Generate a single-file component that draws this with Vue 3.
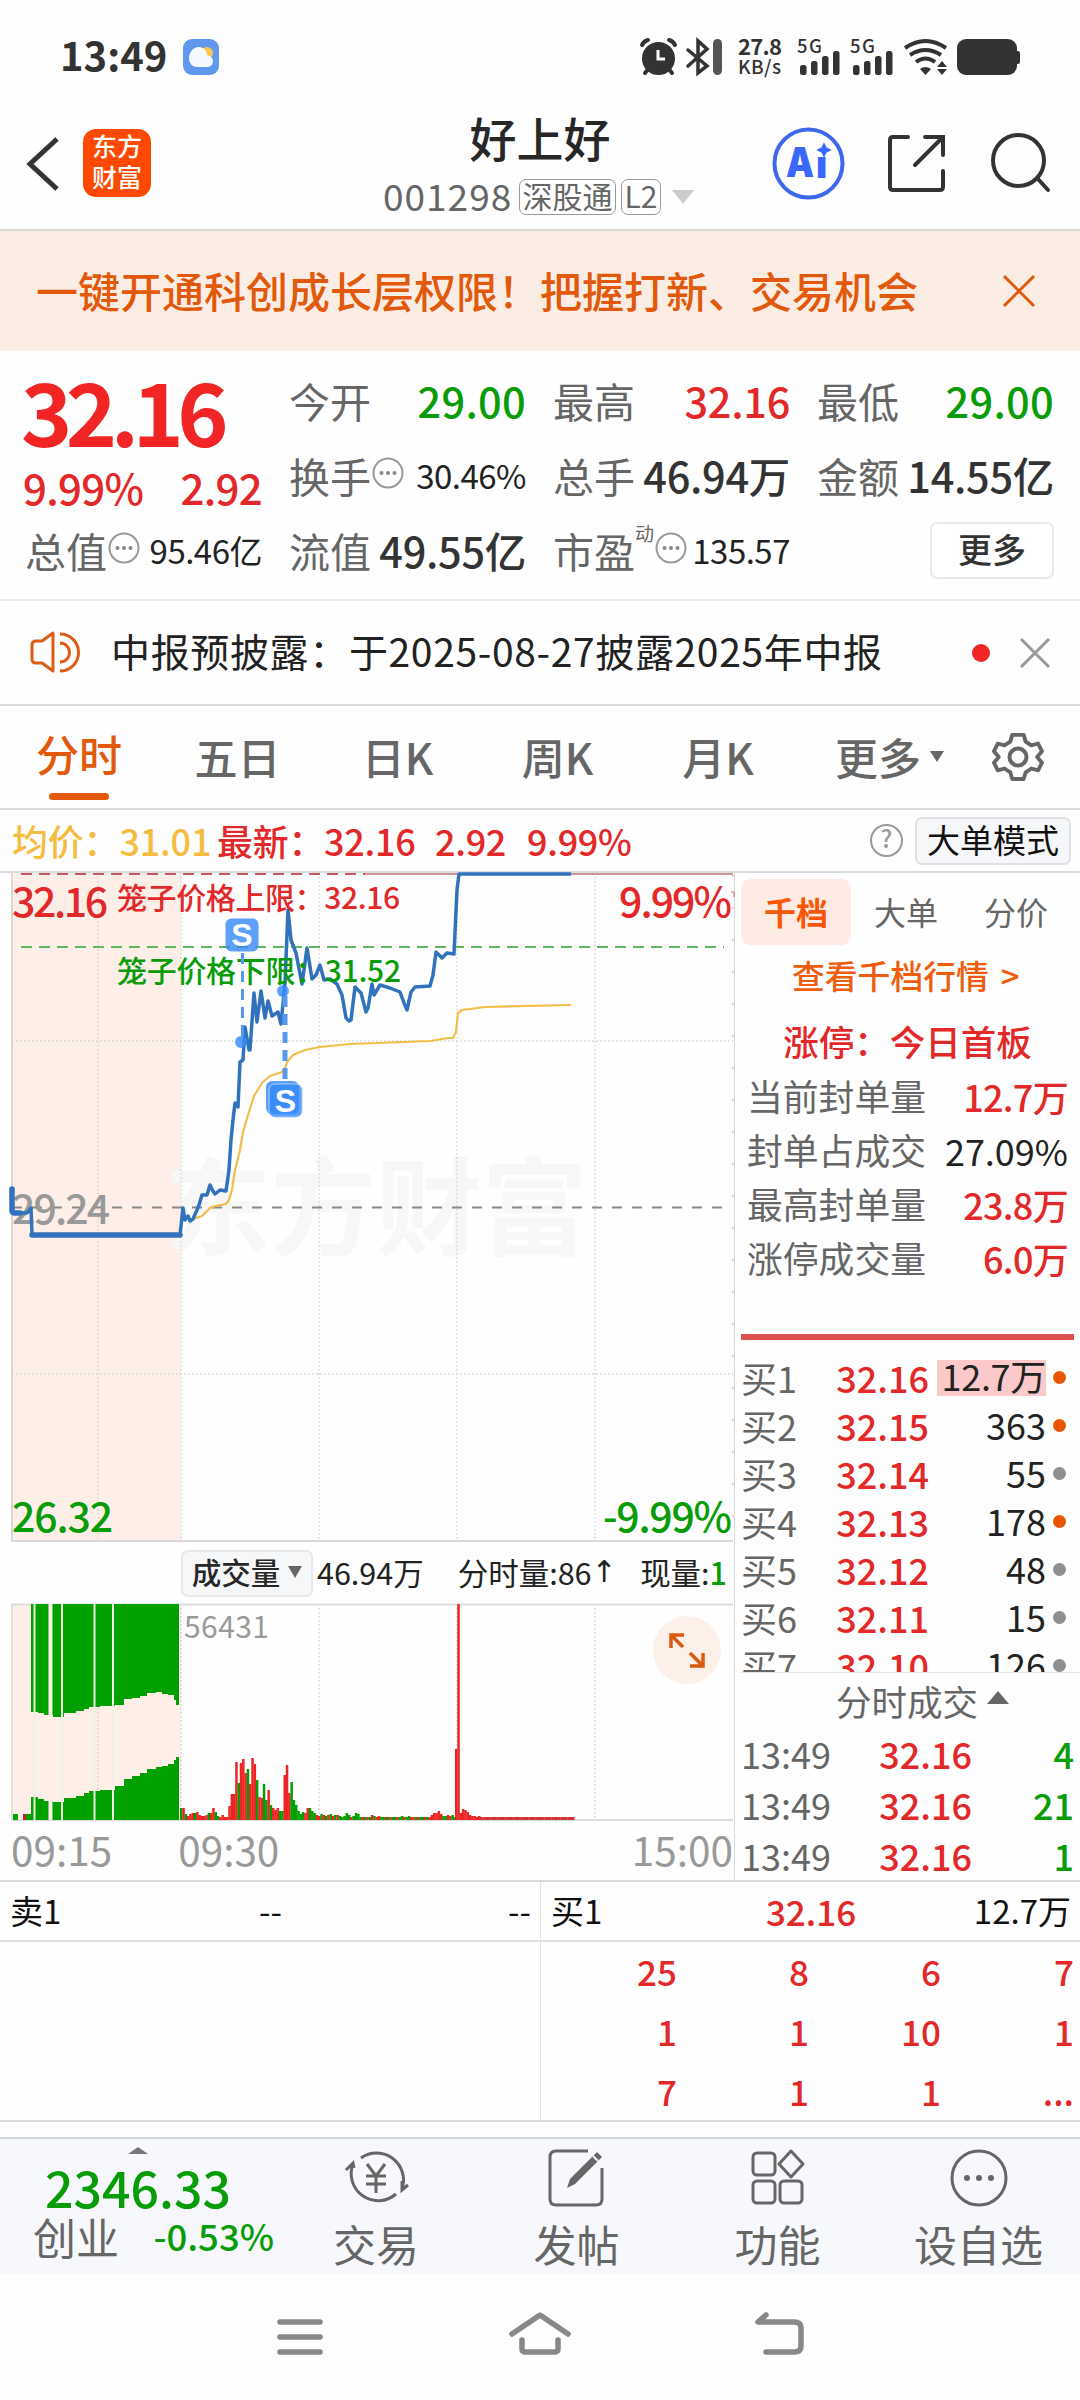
<template>
  <div class="phone">
    <!-- 系统状态栏 -->
    <div class="status">
      <span class="clock">13:49</span>
      <svg class="weather" viewBox="0 0 36 36">
        <rect width="36" height="36" rx="9" fill="#6098ee" />
        <circle cx="24" cy="14" r="6" fill="#f9c74f" />
        <path d="M14 28a8 8 0 0 1-8-8c0-7 4-12 10-12 5 0 8 4 8 8 4 1 6 3 6 6 0 4-3 6-6 6z" fill="#f4f9ff" />
      </svg>
      <svg class="sys" viewBox="640 36 384 42">
        <g stroke="#333" stroke-width="4" fill="none" stroke-linecap="round">
          <circle cx="658.500" cy="58.500" r="14.500" fill="#333" />
          <path d="M642 45q2-4 6-5M669 40q4 1 6 5M649 68l-4 5M668 68l4 5" />
          <path d="M658 50v9h7" stroke="#fff" stroke-width="3" stroke-linecap="butt" />
          <path d="M688 50l19 16-9 7V41l9 8-19 17" stroke-width="3.500" />
        </g>
        <rect x="713" y="39" width="9" height="36" rx="4.500" fill="#555" />
        <g fill="#333">
          <text x="738" y="55" font-size="22" font-weight="700" textLength="44">27.8</text>
          <text x="738" y="74" font-size="19" font-weight="500" textLength="43">KB/s</text>
          <g v-for="x in [0, 53]" :key="x">
            <text :x="797 + x" y="53" font-size="18.500" font-weight="500" textLength="25">5G</text>
            <rect :x="800 + x" y="65" width="6.500" height="10" rx="2.500" />
            <rect :x="811 + x" y="61" width="6.500" height="14" rx="2.500" />
            <rect :x="822 + x" y="56" width="6.500" height="19" rx="2.500" />
            <rect :x="833 + x" y="51" width="6.500" height="24" rx="2.500" />
          </g>
          <path d="M920 69q5-4 11 0l-5.500 6zM937 67l5-6 5 6zM937 69l5 6 5-6z" />
          <rect x="957" y="39" width="60" height="36" rx="9" />
          <rect x="1014" y="51" width="6" height="13" rx="2" />
        </g>
        <g stroke="#333" stroke-width="4" fill="none">
          <path d="M905 48q20.500-14 41 0M910 55q15.500-10 31 0M916 62q9.500-7 19 0" />
        </g>
      </svg>
    </div>

    <!-- 标题栏 -->
    <header class="header">
      <svg class="back" viewBox="0 0 34 56"><path d="M31 3L4 28l27 25" fill="none" stroke="#333" stroke-width="5" /></svg>
      <div class="logo"><span>东方</span><span>财富</span></div>
      <div class="title">
        <h1>好上好</h1>
        <div class="code">
          <span class="num">001298</span>
          <span class="tag wide">深股通</span>
          <span class="tag">L2</span>
          <i class="caret"></i>
        </div>
      </div>
      <svg class="actions" viewBox="772 126 282 74">
        <circle cx="808.500" cy="163.500" r="34" fill="none" stroke="#3d67ec" stroke-width="4" />
        <g class="ai" fill="#3a68ff">
          <text x="786" y="177" font-size="41" textLength="28" lengthAdjust="spacingAndGlyphs">A</text>
          <text x="816" y="178" font-size="38">ı</text>
        </g>
        <path d="M824 144l2 4 4 2-4 2-2 4-2-4-4-2 4-2z" fill="#3a68ff" stroke="#3a68ff" stroke-width="1.500" />
        <g fill="none" stroke="#333" stroke-width="4" stroke-linecap="round">
          <path d="M908 137h-15q-3 0-3 3v47q0 3 3 3h47q3 0 3-3v-16M925 137h18v18M943 137l-28 28" />
          <circle cx="1018.500" cy="160.500" r="25.500" />
          <path d="M1038 179l10 11" />
        </g>
      </svg>
    </header>

    <div class="banner">
      <span>一键开通科创成长层权限！把握打新、交易机会</span>
      <svg viewBox="0 0 32 32"><path d="M1 1l30 30M31 1L1 31" stroke="#e2590b" stroke-width="3" /></svg>
    </div>

    <!-- 行情报价 -->
    <section class="quote">
      <div class="price">
        <div class="big">32.16</div>
        <div class="chg"><span>9.99%</span><span>2.92</span></div>
      </div>
      <div v-for="q in quotes" :key="q.label" class="cell">
        <span class="label">{{ q.label }}<sup v-if="q.sup">{{ q.sup }}</sup></span>
        <svg v-if="q.tip" class="tip" viewBox="0 0 32 32">
          <circle cx="16" cy="16" r="14.500" fill="none" stroke="#999" stroke-width="2" />
          <g fill="#888"><circle cx="9.500" cy="16" r="2" /><circle cx="16" cy="16" r="2" /><circle cx="22.500" cy="16" r="2" /></g>
        </svg>
        <span class="value" :class="[q.color, { small: q.tip }]">{{ q.value }}</span>
      </div>
      <div class="cell"><button class="more">更多</button></div>
    </section>

    <div class="news">
      <svg class="horn" viewBox="0 0 50 44" fill="none" stroke="#de5c14" stroke-width="3" stroke-linejoin="round">
        <path d="M23 2L12 10H6q-4 0-4 4v14q0 4 4 4h6l11 8z" />
        <path d="M30 12a9.500 9.500 0 0 1 0 19M30 3a18.500 18.500 0 0 1 0 37" />
      </svg>
      <span class="text">中报预披露：于2025-08-27披露2025年中报</span>
      <i class="dot"></i>
      <svg class="close" viewBox="0 0 30 30"><path d="M1 1l28 28M29 1L1 29" stroke="#999" stroke-width="3" /></svg>
    </div>

    <nav class="tabs">
      <span class="active">分时</span>
      <span>五日</span>
      <span>日K</span>
      <span>周K</span>
      <span>月K</span>
      <span class="last">更多<i></i></span>
      <svg viewBox="0 0 52 52" fill="none" stroke="#666" stroke-width="4" stroke-linejoin="round">
        <path d="M20 3h12l2 7 6 4 7-2 4 8-5 6 5 6-4 8-7-2-6 4-2 7H20l-2-7-6-4-7 2-4-8 5-6-5-6 4-8 7 2 6-4z" transform="translate(1 1) scale(.96)" />
        <circle cx="26" cy="26" r="8.500" />
      </svg>
    </nav>

    <div class="info">
      <span class="avg">均价：31.01</span>
      <span class="last">最新：32.16</span>
      <span class="last d">2.92</span>
      <span class="last p">9.99%</span>
      <span class="help">?</span>
      <button>大单模式</button>
    </div>

    <div class="body">
      <div class="charts">
        <!-- 分时走势 -->
        <svg class="trend" viewBox="0 873 735 669">
          <rect x="12" y="873" width="169" height="668" fill="#fdeee7" />
          <text class="mark" x="165" y="1247" textLength="422" lengthAdjust="spacingAndGlyphs">东方财富</text>
          <g stroke="#d4d4d4" stroke-width="1.500" stroke-dasharray="1.500 2.500">
            <path v-for="x in [98, 181, 319, 457, 595]" :key="x" :d="`M${x} 873V1541`" />
            <path d="M12 1041H733M12 1374H733" />
          </g>
          <path d="M12 873V1541H733" fill="none" stroke="#d8d8d8" stroke-width="2" />
          <path d="M733 875V1541" stroke="#dc9a9a" stroke-width="1" stroke-dasharray="2 30" />
          <path d="M731 892h3v5" fill="none" stroke="#dc6a6a" />
          <path d="M21 874H733" stroke="#c6595c" stroke-width="2" stroke-dasharray="11 7" />
          <path d="M365 874H733" stroke="#cf9599" stroke-width="2" />
          <path d="M21 947H724" stroke="#5fb75f" stroke-width="2" stroke-dasharray="11 7" />
          <path d="M12 1207.500H730" stroke="#888" stroke-width="2" stroke-dasharray="10 10" />
          <g class="axis">
            <text x="12" y="917" fill="#e22828" textLength="96">32.16</text>
            <text x="12" y="1224" fill="#999" textLength="98">29.24</text>
            <text x="12" y="1532" fill="#089c08" textLength="101">26.32</text>
            <text x="619" y="917" fill="#e22828" textLength="113">9.99%</text>
            <text x="603" y="1532" fill="#089c08" textLength="129">-9.99%</text>
          </g>
          <polyline :points="avgLine" fill="none" stroke="#f2bd49" stroke-width="2.200" stroke-linejoin="round" />
          <polyline :points="priceLine" fill="none" stroke="#3073bc" stroke-width="3.500" stroke-linejoin="round" />
          <path d="M12 1189V1211M14 1213H20M32 1235H180" stroke="#3073bc" stroke-width="5.500" stroke-linecap="round" />
          <g class="cage">
            <text x="117" y="909" fill="#e22828" textLength="283">笼子价格上限：32.16</text>
            <text x="117" y="982" fill="#089c08" textLength="284">笼子价格下限：31.52</text>
          </g>
          <!-- 卖出标记 -->
          <g stroke="#5798ef" stroke-dasharray="11 7">
            <path d="M242.500 953V1040" stroke-width="3" />
            <path d="M285 996V1082" stroke-width="5" />
          </g>
          <g fill="#3388fb" fill-opacity=".8">
            <circle cx="241" cy="1042" r="6" /><circle cx="283" cy="991" r="6" />
            <rect x="225.500" y="918.500" width="33" height="33" rx="6" />
            <rect x="266" y="1081" width="33" height="33" rx="6" />
            <rect x="269" y="1084" width="33" height="33" rx="6" stroke="#a9cffc" />
          </g>
          <g class="sell"><text x="242" y="946">S</text><text x="285.500" y="1112">S</text></g>
        </svg>

        <div class="volbar">
          <button>成交量<i></i></button>
          <span class="total">46.94万</span>
          <span class="min">分时量:86<small>↑</small></span>
          <span class="now">现量:<b>1</b></span>
        </div>

        <svg class="volume" viewBox="0 1604 735 218">
          <rect x="12" y="1604" width="169" height="216" fill="#fdeee7" />
          <path v-for="x in [98, 181, 319, 457, 595]" :key="x" :d="`M${x} 1604V1820`" stroke="#d4d4d4" stroke-width="1.500" stroke-dasharray="1.500 2.500" />
          <path d="M12 1604.500H733M12 1604V1820H733" fill="none" stroke="#ddd" stroke-width="2" />
          <path :d="auctionPath" fill="#00a000" />
          <path d="M34.500 1604V1820M62 1604V1820M94.500 1604V1820M113 1604V1820" stroke="#eef0e2" stroke-width="2" />
          <path d="M50.500 1604V1820" stroke="#fdeee7" stroke-width="4" />
          <path d="M13 1814h5v6h-5zM26 1814h5v6h-5z" fill="#00a000" />
          <path d="M23 1814h3v6h-3z" fill="#c02828" />
          <rect v-for="(b, i) in bars" :key="i" :x="b.x" :y="1820 - b.h" width="2.500" :height="b.h" :fill="b.c" />
          <text x="184" y="1638" font-size="30" fill="#999" textLength="85">56431</text>
          <circle cx="687" cy="1650" r="34" fill="#fdf0e8" />
          <path d="M671 1648v-13h13M672 1636l11 11M703 1653v13h-13M702 1665l-12-12" fill="none" stroke="#dc5a10" stroke-width="3.500" />
        </svg>
        <div class="times"><span>09:15</span><span class="t2">09:30</span><span class="t3">15:00</span></div>
      </div>

      <!-- 右侧盘口 -->
      <aside class="side">
        <div class="side-tabs"><span class="on">千档</span><span>大单</span><span>分价</span></div>
        <div class="link">查看千档行情<span>&gt;</span></div>
        <div class="limit">涨停：今日首板</div>
        <div v-for="s in stats" :key="s.k" class="stat"><span>{{ s.k }}</span><b :class="s.c">{{ s.v }}</b></div>
        <div class="bar"></div>
        <div class="orders">
          <div v-for="(o, i) in orders" :key="i" class="order">
            <span class="lv">买{{ i + 1 }}</span>
            <span class="pr">{{ o[0] }}</span>
            <span class="qty"><em :class="{ hl: i === 0 }">{{ o[1] }}</em></span>
            <i :class="{ hot: o[2] }"></i>
          </div>
        </div>
        <div class="deal-title">分时成交<i></i></div>
        <div v-for="n in [4, 21, 1]" :key="n" class="deal"><span>13:49</span><span class="pr">32.16</span><span class="n">{{ n }}</span></div>
      </aside>
    </div>

    <!-- 买一卖一队列 -->
    <div class="queue">
      <div class="half">
        <div class="qhead"><span>卖1</span><span class="mid">--</span><span class="end">--</span></div>
      </div>
      <div class="half buy">
        <div class="qhead"><span>买1</span><span class="mid red">32.16</span><span class="end">12.7万</span></div>
        <div class="qgrid"><span v-for="(n, i) in queue" :key="i">{{ n }}</span></div>
      </div>
    </div>

    <footer class="toolbar">
      <div class="index">
        <i></i>
        <div class="point">2346.33</div>
        <div class="line"><span>创业</span><b>-0.53%</b></div>
      </div>
      <div class="tool">
        <svg viewBox="0 0 66 60">
          <path d="M18 10a27 27 0 0 1 41 31M53 46A27 27 0 0 1 10 16M3 22l7-7 1 5M59 33v9l6-5" />
          <path d="M24 16l9 12 9-12M23 28h20M23 36h20M33 28v17" />
        </svg>
        <span>交易</span>
      </div>
      <div class="tool">
        <svg viewBox="0 0 66 60">
          <path d="M44 3H12q-6 0-6 6v42q0 6 6 6h40q6 0 6-6V20" />
          <path d="M23 40l3-9L53 4l5 5-27 27z" fill="#666" stroke="none" />
          <path d="M49 8l5 5" stroke="#f7f8fa" stroke-width="2" />
        </svg>
        <span>发帖</span>
      </div>
      <div class="tool">
        <svg viewBox="0 0 66 60">
          <rect x="8" y="5" width="22" height="22" rx="4" />
          <path d="M46 3l12 13-12 13-12-13z" stroke-linejoin="round" />
          <rect x="8" y="33" width="22" height="22" rx="4" />
          <rect x="35" y="33" width="22" height="22" rx="4" />
        </svg>
        <span>功能</span>
      </div>
      <div class="tool">
        <svg viewBox="0 0 66 60">
          <circle cx="33" cy="30" r="27" />
          <g fill="#666" stroke="none"><circle cx="21" cy="30" r="3" /><circle cx="33" cy="30" r="3" /><circle cx="45" cy="30" r="3" /></g>
        </svg>
        <span>设自选</span>
      </div>
    </footer>

    <div class="sysnav">
      <svg viewBox="0 0 540 60" fill="none" stroke="#888" stroke-width="5.500" stroke-linecap="round" stroke-linejoin="round">
        <path d="M13 22h40M13 37h40M13 52h40" />
        <path d="M245 34l28-19 28 19M255 40v9q0 3 4 3h28q4 0 4-3v-9" />
        <path d="M499 15l-8 7h36q7 0 7 6v18q0 6-7 6h-28" />
      </svg>
    </div>
  </div>
</template>

<script setup>
const quotes = [
  { label: '今开', value: '29.00', color: 'green' },
  { label: '最高', value: '32.16', color: 'red' },
  { label: '最低', value: '29.00', color: 'green' },
  { label: '换手', value: '30.46%', tip: true },
  { label: '总手', value: '46.94万' },
  { label: '金额', value: '14.55亿' },
  { label: '总值', value: '95.46亿', tip: true },
  { label: '流值', value: '49.55亿' },
  { label: '市盈', value: '135.57', tip: true, sup: '动' },
]

const stats = [
  { k: '当前封单量', v: '12.7万', c: 'red' },
  { k: '封单占成交', v: '27.09%', c: '' },
  { k: '最高封单量', v: '23.8万', c: 'red' },
  { k: '涨停成交量', v: '6.0万', c: 'red' },
]

// 价格, 数量, 是否橙点
const orders = [
  ['32.16', '12.7万', true],
  ['32.15', '363', true],
  ['32.14', '55', false],
  ['32.13', '178', true],
  ['32.12', '48', false],
  ['32.11', '15', false],
  ['32.10', '126', false],
]

const queue = ['25', '8', '6', '7', '1', '1', '10', '1', '7', '1', '1', '...']

const priceLine = '12,1188 12,1213 20,1213 27,1213 31,1208 32,1235 180,1235 183,1208 185,1220 188,1216 190,1221 193,1219 197,1210 199,1205 202,1195 207,1195 210,1185 213,1191 215,1194 220,1190 226,1191 229,1170 231,1140 233,1120 235,1103 238,1107 240,1062 243,1060 245,1027 249,1050 250,1050 254,993 257,1022 261,991 265,1018 268,1001 272,1016 278,1012 281,1024 285,983 288,910 291,940 296,953 302,984 307,948 312,979 316,975 320,965 324,980 330,979 337,984 342,995 346,1018 349,1021 351,1020 355,987 361,993 366,1012 368,1008 372,984 374,995 380,985 390,988 400,992 404,1003 407,1010 411,992 415,987 430,986 433,975 436,952 442,958 447,953 454,954 457,890 459,874 571,874'

const avgLine = '193,1219 202,1216 210,1208 215,1206 226,1204 229,1200 232,1190 235,1170 240,1150 243,1132 248,1115 254,1096 262,1083 270,1076 282,1072 285,1068 287,1062 293,1055 305,1050 320,1047 350,1044 430,1041 448,1038 453,1038 456,1032 458,1013 462,1010 470,1009 485,1007 571,1005'

// 集合竞价: x, 上沿, 下沿
const auction = [
  [31, 1712, 1797], [38, 1713, 1799], [44, 1715, 1801], [53, 1717, 1802], [64, 1713, 1798],
  [76, 1711, 1796], [84, 1709, 1793], [89, 1707, 1791], [100, 1706, 1790], [115, 1705, 1786],
  [124, 1699, 1779], [132, 1698, 1776], [140, 1696, 1773], [147, 1693, 1769], [156, 1692, 1767],
  [162, 1694, 1766], [168, 1695, 1764], [174, 1700, 1760], [176, 1705, 1757],
]
const auctionPath = auction
  .map(([x, top, bottom], i) => {
    const end = i + 1 < auction.length ? auction[i + 1][0] : 179
    return `M${x} 1604H${end}V${top}H${x}zM${x} ${bottom}H${end}V1820H${x}z`
  })
  .join('')

// 每分钟成交量, g 绿 r 红
const volumes = (
  'g12 r12 g6 r4 r6 r7 g7 r8 r5 r4 r4 r5 g7 r7 r12 g8 g4 r3 r5 r3 r3 r14 r26 r26 r58 g37 r57 r61 r47 g51 r36 r62 r56 g40 r23 r22 g36 g20 r30 g15 r12 r10 r12 g9 g9 r45 r55 r27 g38 g20 g15 ' +
  'g9 g6 g8 r7 r12 g12 g9 g7 r5 r4 g6 r5 g4 r5 g6 r4 g5 r5 g4 g3 g4 g7 g5 r3 g4 g7 g6 g3 r3 g3 r3 g3 r5 g4 r3 r4 g3 g3 r3 g3 r3 g3 g3 r3 g3 g4 r3 g3 g4 r3 r3 g3 r3 g3 g3 r3 g3 r3 r5 r7 r7 r9 r6 g4 g4 r5 r4 g5 g3'
).split(' ')
const bars = volumes.map((s, i) => ({ x: 180 + i * 2.3, h: Number(s.slice(1)), c: s[0] === 'g' ? '#00a000' : '#ee2424' }))
const limitBars = [71, 216, 7, 11, 10, 8, 5, 4, 4, 3, 4]
limitBars.forEach((h, i) => bars.push({ x: 455 + i * 2.3, h, c: '#ee2424' }))
for (let x = 480; x < 572; x += 2.3) bars.push({ x, h: 3, c: '#cf3030' })
</script>

<style>
body {
  background: #fff;
}
</style>

<style scoped>
.phone {
  width: 1080px;
  height: 2400px;
  overflow: hidden;
  display: flex;
  flex-direction: column;
  background: #fefefe;
  color: #333;
  font-family: 'Noto Sans CJK SC', sans-serif;
  font-weight: 400;
  line-height: 1;
  white-space: nowrap;
}
.phone > * {
  flex: none;
  box-sizing: border-box;
}
button {
  font-family: inherit;
  line-height: 1;
  padding: 0 0 4px;
  box-sizing: border-box;
}
h1 {
  margin: 0;
}
svg {
  overflow: visible;
}
.red {
  color: #e22828;
}
.green {
  color: #089c08;
}

.status {
  height: 100px;
  display: flex;
  align-items: center;
  padding: 13px 56px 0 60px;
}
.clock {
  font-size: 40px;
  font-weight: 700;
  width: 108px;
  padding-bottom: 5px;
}
.weather {
  width: 36px;
  height: 36px;
  margin-left: 15px;
}
.sys {
  width: 384px;
  height: 42px;
  margin-left: auto;
}

.header {
  height: 131px;
  display: flex;
  align-items: flex-start;
  border-bottom: 2px solid #d8d8d6;
}
.back {
  width: 34px;
  height: 56px;
  margin: 36px 0 0 26px;
}
.logo {
  width: 68px;
  height: 68px;
  margin: 29px 0 0 23px;
  padding: 4px 0 8px;
  box-sizing: border-box;
  border-radius: 13px;
  background: #ff4800;
  color: #fff;
  font-size: 25px;
  font-weight: 500;
  display: flex;
  flex-direction: column;
  align-items: center;
  justify-content: space-between;
}
.title {
  width: 460px;
  margin-left: 159px;
  display: flex;
  flex-direction: column;
  align-items: center;
}
.title h1 {
  font-size: 47px;
  font-weight: 500;
  color: #272727;
  margin-top: 13px;
}
.code {
  display: flex;
  align-items: center;
  align-self: flex-start;
  margin: 17px 0 0 73px;
  color: #666;
  height: 40px;
}
.code .num {
  font-size: 37px;
  width: 136px;
  letter-spacing: 1px;
  padding-bottom: 3px;
}
.tag {
  width: 40px;
  height: 36px;
  box-sizing: border-box;
  border: 1.5px solid #999;
  border-radius: 7px;
  font-size: 30px;
  line-height: 30px;
  text-align: center;
  margin-right: 11px;
}
.tag.wide {
  width: 97px;
  margin-right: 5px;
}
.caret {
  border: 11px solid transparent;
  border-top: 14px solid #ccc;
  border-bottom: 0;
}
.actions {
  width: 282px;
  height: 74px;
  margin: 26px 26px 0 auto;
}
.ai {
  font-family: Inter, sans-serif;
  font-weight: 900;
}

.banner {
  height: 120px;
  background: #fcede4;
  color: #e2590b;
  font-size: 42px;
  font-weight: 500;
  display: flex;
  align-items: center;
  justify-content: space-between;
  padding: 0 45px 0 36px;
}
.banner span {
  padding-bottom: 2px;
}
.banner svg {
  width: 32px;
  height: 32px;
}

.quote {
  height: 250px;
  border-bottom: 2px solid #eaeaea;
  display: grid;
  grid-template-columns: repeat(4, 237px);
  grid-template-rows: repeat(3, 75px);
  column-gap: 27px;
  padding: 14px 0 0 25px;
}
.price {
  grid-row: span 2;
  color: #f22525;
}
.big {
  font-size: 87px;
  font-weight: 700;
  letter-spacing: -6.5px;
  margin: 1px 0 0 -4px;
}
.chg {
  display: flex;
  justify-content: space-between;
  font-size: 42px;
  letter-spacing: -0.7px;
  color: #e22828;
  margin: 13px 0 0 -2px;
  font-weight: 500;
}
.cell {
  display: flex;
  align-items: center;
  padding-bottom: 4px;
}
.label {
  font-size: 41px;
  color: #666;
  display: flex;
}
.label sup {
  font-size: 19px;
  margin-top: -7px;
}
.tip {
  width: 32px;
  height: 32px;
  margin: 0 0 6px 1px;
}
.value {
  font-size: 41.5px;
  letter-spacing: -0.3px;
  margin-left: auto;
  font-weight: 500;
}
.value.green {
  letter-spacing: 0.3px;
}
.value.small {
  font-size: 33px;
  font-weight: 400;
  letter-spacing: -0.5px;
  color: #222;
}
.more {
  width: 124px;
  height: 57px;
  margin-left: auto;
  border: 2px solid #e6e8ea;
  border-radius: 7px;
  background: #fff;
  color: #333;
  font-size: 34px;
  font-weight: 500;
}

.news {
  height: 105px;
  border-bottom: 2px solid #d8d9db;
  display: flex;
  align-items: center;
  padding: 0 30px 0 30px;
}
.horn {
  width: 50px;
  height: 44px;
}
.news .text {
  font-size: 39px;
  letter-spacing: 0.65px;
  margin-left: 31px;
  padding-bottom: 4px;
  color: #222;
}
.dot {
  width: 18px;
  height: 18px;
  border-radius: 50%;
  background: #f22525;
  margin-left: auto;
}
.close {
  width: 30px;
  height: 30px;
  margin-left: 30px;
}

.tabs {
  height: 104px;
  border-bottom: 2px solid #d8d9db;
  display: grid;
  grid-template-columns: 158px 159px 161px 159px 162px 191px 52px;
  align-items: center;
  font-size: 43px;
  font-weight: 500;
  color: #666;
}
.tabs span {
  justify-self: center;
  padding-bottom: 1px;
}
.tabs .active {
  color: #e2590b;
  height: 76px;
  align-self: end;
  display: flex;
  flex-direction: column;
  align-items: center;
  padding: 0;
}
.tabs .active::after {
  content: '';
  width: 60px;
  height: 7px;
  border-radius: 4px;
  background: #e2590b;
  margin-top: 18px;
}
.tabs .last {
  justify-self: end;
  margin-right: 46px;
  display: flex;
  align-items: center;
}
.tabs .last i {
  border: 7px solid transparent;
  border-top: 11px solid #666;
  border-bottom: 0;
  margin-left: 9px;
}
.tabs svg {
  width: 52px;
  height: 52px;
  margin-left: 2px;
}

.info {
  height: 63px;
  border-bottom: 2px solid #d8d9db;
  display: flex;
  align-items: center;
  font-size: 36px;
  font-weight: 500;
  padding: 0 9px 0 12px;
}
.info span {
  padding-bottom: 2px;
}
.info .avg {
  color: #f5bc41;
  width: 205px;
  letter-spacing: -0.2px;
}
.info .last {
  color: #e22828;
  width: 218px;
  letter-spacing: -0.3px;
}
.info .last.d {
  width: 92px;
}
.info .last.p {
  width: 110px;
}
.info .help {
  box-sizing: border-box;
  width: 33px;
  height: 33px;
  border: 2.5px solid #999;
  border-radius: 50%;
  font-size: 24px;
  text-align: center;
  color: #999;
  margin-left: auto;
  padding: 0;
}
.info button {
  width: 156px;
  height: 48px;
  margin-left: 12px;
  padding: 0 0 3px;
  border: 2px solid #dfe1e5;
  border-radius: 7px;
  background: #f6f7f9;
  font-size: 33px;
  font-weight: 400;
  color: #111;
}

.body {
  height: 1009px;
  display: flex;
  border-bottom: 2px solid #d8d9db;
}
.charts {
  width: 735px;
  box-sizing: border-box;
  border-right: 1px solid #d8d9db;
}
.trend {
  display: block;
  width: 735px;
  height: 669px;
}
.axis {
  font-size: 41px;
  font-weight: 500;
}
.cage {
  font-size: 30px;
  font-weight: 500;
}
.mark {
  font-size: 106px;
  font-weight: 700;
  fill: #f7f7f7;
}
.sell {
  font: 700 32px 'Liberation Sans', sans-serif;
  fill: #fff;
  text-anchor: middle;
}
.volbar {
  height: 62px;
  display: flex;
  align-items: center;
  padding-left: 181px;
  font-size: 30.5px;
  color: #222;
}
.volbar > span {
  padding-bottom: 2px;
}
.volbar button {
  width: 132px;
  height: 47px;
  display: flex;
  align-items: center;
  justify-content: center;
  padding: 0 0 3px;
  border: 2px solid #e6e8eb;
  border-radius: 7px;
  background: #f6f7f9;
  font-size: 29.5px;
  font-weight: 500;
  color: #272727;
}
.volbar button i {
  border: 7px solid transparent;
  border-top: 12px solid #666;
  border-bottom: 0;
  margin-left: 8px;
}
.total {
  margin-left: 4px;
}
.min {
  margin-left: 34px;
  display: flex;
}
.min small {
  font-family: 'DejaVu Sans', sans-serif;
  font-size: 30px;
  width: 20px;
}
.now {
  margin-left: auto;
  padding-right: 7px;
}
.now b {
  color: #089c08;
  font-weight: 500;
}
.volume {
  display: block;
  width: 735px;
  height: 218px;
}
.times {
  display: flex;
  padding: 7px 1px 0 11px;
  font-size: 40.5px;
  color: #999;
}
.times .t2 {
  margin-left: 66px;
}
.times .t3 {
  margin-left: auto;
}

.side {
  width: 345px;
  box-sizing: border-box;
  padding: 6px 6px 0 6px;
}
.side-tabs {
  display: flex;
  height: 66px;
  font-size: 32px;
  color: #666;
}
.side-tabs span {
  width: 110px;
  line-height: 64px;
  text-align: center;
}
.side-tabs .on {
  background: #feece4;
  border-radius: 9px;
  color: #fb5607;
  font-weight: 700;
}
.link {
  margin-top: 14px;
  padding-left: 51px;
  font-size: 32.8px;
  color: #ee5c0c;
  font-weight: 500;
}
.link span {
  margin-left: 12px;
}
.limit {
  margin: 31px 0 11px;
  text-align: center;
  font-size: 35.5px;
  font-weight: 500;
  color: #e22828;
}
.stat {
  height: 54px;
  padding: 0 6px;
  display: flex;
  justify-content: space-between;
  align-items: center;
  font-size: 35.8px;
  color: #666;
}
.stat b {
  font-weight: 400;
  font-size: 36px;
  color: #222;
}
.stat b.red {
  color: #e22828;
  font-weight: 500;
  letter-spacing: -0.7px;
}
.bar {
  height: 6px;
  margin-top: 49px;
  background: #de5050;
}
.orders {
  height: 333px;
  overflow: hidden;
  padding-top: 13px;
  box-sizing: border-box;
  border-bottom: 1px solid #e4e4e4;
  margin-right: -6px;
}
.order {
  height: 48px;
  display: flex;
  align-items: center;
  font-size: 36px;
}
.lv {
  width: 66px;
  color: #666;
}
.order .pr {
  width: 122px;
  text-align: right;
  color: #e22828;
  font-weight: 500;
}
.qty {
  width: 117px;
  text-align: right;
  color: #222;
}
.qty em {
  font-style: normal;
  display: inline-block;
  height: 36px;
  line-height: 31px;
}
.qty .hl {
  background: #fbc9c9;
  padding-left: 5px;
  margin-bottom: 2px;
  letter-spacing: -0.3px;
}
.order i {
  width: 13px;
  height: 13px;
  border-radius: 50%;
  background: #8e8e93;
  margin-left: 7px;
}
.order i.hot {
  background: #e85500;
}
.deal-title {
  height: 54px;
  display: flex;
  align-items: center;
  padding-left: 95px;
  font-size: 35.5px;
  color: #666;
}
.deal-title i {
  border: 11px solid transparent;
  border-bottom: 13px solid #666;
  border-top: 0;
  margin: 0 0 5px 9px;
}
.deal {
  height: 51px;
  display: flex;
  align-items: center;
  font-size: 36px;
  color: #666;
}
.deal .pr {
  width: 141px;
  text-align: right;
  color: #e22828;
  font-weight: 500;
}
.deal .n {
  margin-left: auto;
  color: #089c08;
  font-weight: 500;
}

.queue {
  height: 240px;
  display: flex;
  border-bottom: 2px solid #d8d9db;
  font-size: 33px;
}
.half {
  width: 540px;
  box-sizing: border-box;
}
.buy {
  border-left: 1px solid #e2e4e6;
}
.qhead {
  height: 60px;
  box-sizing: border-box;
  display: grid;
  grid-template-columns: 1fr 1fr 1fr;
  align-items: center;
  padding: 0 9px 2px 10px;
  border-bottom: 2px solid #dfe1e2;
  color: #111;
}
.qhead .mid {
  text-align: center;
}
.qhead .mid.red {
  color: #e22828;
  font-size: 35px;
  font-weight: 500;
}
.qhead .end {
  text-align: right;
}
.qgrid {
  display: grid;
  grid-template-columns: 136px 132px 132px 133px;
  grid-auto-rows: 60px;
  align-items: center;
  text-align: right;
  color: #e22828;
  font-size: 35px;
  font-weight: 500;
  margin-top: -2px;
}

.toolbar {
  height: 137px;
  margin-top: 15px;
  border-top: 2px solid #d0d4da;
  background: #f6f8fb;
  display: flex;
  color: #666;
  font-size: 43px;
}
.index {
  width: 276px;
  display: flex;
  flex-direction: column;
  align-items: center;
}
.index i {
  border: 10px solid transparent;
  border-bottom: 7px solid #777;
  border-top: 0;
  margin-top: 8px;
}
.point {
  font-size: 50px;
  font-weight: 500;
  color: #089c08;
  margin-top: 7px;
}
.line {
  display: flex;
  align-items: center;
  align-self: stretch;
  justify-content: space-between;
  padding: 0 2px 0 33px;
  margin-top: 4px;
}
.line b {
  font-size: 36.5px;
  font-weight: 500;
  color: #089c08;
}
.tool {
  width: 201px;
  display: flex;
  flex-direction: column;
  align-items: center;
}
.tool svg {
  width: 66px;
  height: 60px;
  margin: 9px 0 14px;
  fill: none;
  stroke: #666;
  stroke-width: 3;
}
.tool:nth-child(2) {
  width: 200px;
}

.sysnav {
  height: 126px;
  display: flex;
  justify-content: center;
  padding-top: 26px;
}
.sysnav svg {
  width: 540px;
  height: 60px;
  margin-left: -6px;
}
</style>
